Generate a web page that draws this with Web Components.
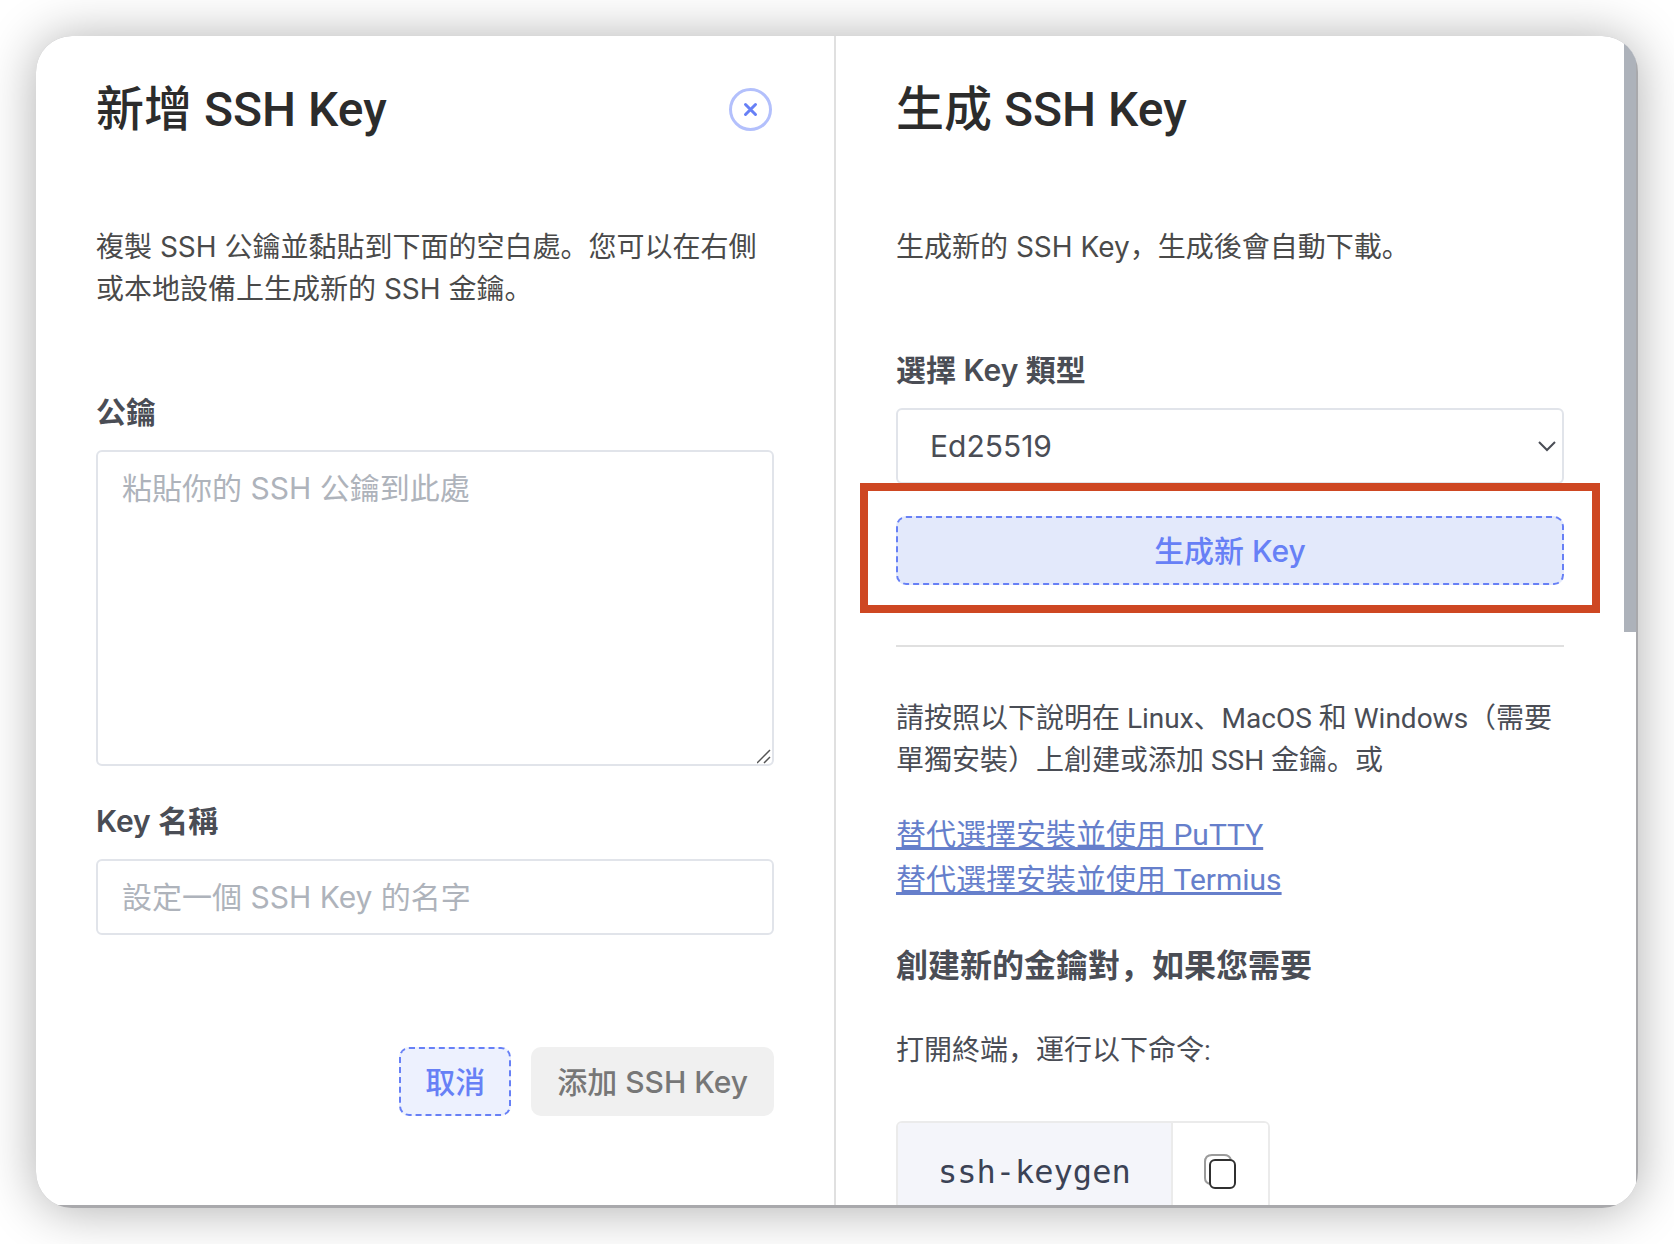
<!DOCTYPE html>
<html lang="zh-Hans">
<head>
<meta charset="utf-8">
<title>SSH Key</title>
<style>
  body {
    margin: 0;
    height: 100vh;
    box-sizing: border-box;
    padding: 36px;
    background: #fff;
    color: #4a4d55;
    font-family: Inter, "Noto Sans CJK SC", sans-serif;
    font-size: 28px;
    line-height: 42px;
  }
</style>
</head>
<body>
<key-dialog>
  <dialog-pane heading="新增 SSH Key">
    <close-button slot="action"></close-button>
    <p>複製 SSH 公鑰並黏貼到下面的空白處。您可以在右側或本地設備上生成新的 SSH 金鑰。</p>
    <text-field label="公鑰" placeholder="粘貼你的 SSH 公鑰到此處" multiline></text-field>
    <text-field label="Key 名稱" placeholder="設定一個 SSH Key 的名字"></text-field>
    <button-row>
      <dialog-button>取消</dialog-button>
      <dialog-button disabled>添加 SSH Key</dialog-button>
    </button-row>
  </dialog-pane>
  <dialog-pane heading="生成 SSH Key" scrollable>
    <p>生成新的 SSH Key，生成後會自動下載。</p>
    <select-field label="選擇 Key 類型" options="Ed25519,RSA,ECDSA"></select-field>
    <highlight-frame>
      <dialog-button active>生成新 Key</dialog-button>
    </highlight-frame>
    <key-guide></key-guide>
  </dialog-pane>
</key-dialog>

<script>
// Two panes side by side in a rounded card
class KeyDialog extends HTMLElement {
  constructor() {
    super();
    this.attachShadow({ mode: 'open' }).innerHTML = `
      <style>
        :host {
          display: block;
          box-sizing: border-box;
          height: 100%;
          padding: 0 2px 3px 0;
          border-radius: 36px;
          overflow: hidden;
          background: #a9a9ac;
          box-shadow: 0 2px 52px rgba(0, 0, 0, 0.32);
        }
        .panes {
          display: grid;
          grid-template-columns: 1fr 1fr;
          height: 100%;
          background: #fff;
        }
        ::slotted(:first-child) {
          border-right: 2px solid #e0e0e0;
        }
      </style>
      <div class="panes"><slot></slot></div>
    `;
  }
}

class DialogPane extends HTMLElement {
  connectedCallback() {
    this.attachShadow({ mode: 'open' }).innerHTML = `
      <style>
        :host {
          display: block;
          position: relative;
          min-width: 0;
          min-height: 0;
          overflow: hidden;
        }
        .content {
          padding: 44px 60px 0;
        }
        :host([scrollable]) .content {
          padding-right: 72px;
        }
        header {
          display: flex;
          align-items: center;
          justify-content: space-between;
          margin-bottom: 86px;
        }
        h2 {
          margin: 0;
          color: #2c2c2c;
          font-family: Roboto, "Noto Sans CJK SC", sans-serif;
          font-size: 48px;
          font-weight: 500;
          line-height: 60px;
        }
        ::slotted(p) {
          margin: 0 0 80px;
          color: #4a4a4a;
        }
        .thumb {
          position: absolute;
          top: 0;
          right: 0;
          width: 12px;
          height: 51%;
          background: #adb2ba;
        }
        :host(:not([scrollable])) .thumb {
          display: none;
        }
      </style>
      <div class="content">
        <header>
          <h2>${this.getAttribute('heading')}</h2>
          <slot name="action"></slot>
        </header>
        <slot></slot>
      </div>
      <div class="thumb"></div>
    `;
  }
}

class CloseButton extends HTMLElement {
  constructor() {
    super();
    this.attachShadow({ mode: 'open' }).innerHTML = `
      <style>
        :host {
          display: block;
        }
        button {
          display: grid;
          place-items: center;
          width: 43px;
          height: 43px;
          margin: 0 2px 2px 0;
          padding: 0;
          border: 3px solid #b3c0fc;
          border-radius: 50%;
          background: none;
        }
      </style>
      <button type="button" aria-label="Close">
        <svg width="15" height="15" viewBox="0 0 15 15" fill="none" stroke="#6780f6" stroke-width="3" stroke-linecap="round">
          <path d="M2.5 2.5l10 10M12.500 2.5l-10 10"/>
        </svg>
      </button>
    `;
  }
}

const fieldStyles = `
  :host {
    display: block;
    margin-bottom: 32px;
    font-size: 30px;
    line-height: 45px;
  }
  label {
    display: block;
    margin-bottom: 15px;
    font-weight: 600;
  }
  input, textarea, select {
    display: block;
    box-sizing: border-box;
    width: 100%;
    height: 76px;
    border: 2px solid #e1e4ea;
    border-radius: 6px;
    background: #fff;
    color: inherit;
    font: inherit;
    outline: none;
  }
`;

class TextField extends HTMLElement {
  connectedCallback() {
    const placeholder = this.getAttribute('placeholder');
    const control = this.hasAttribute('multiline')
      ? `<textarea id="field" placeholder="${placeholder}"></textarea>`
      : `<input id="field" type="text" placeholder="${placeholder}">`;
    this.attachShadow({ mode: 'open' }).innerHTML = `
      <style>
        ${fieldStyles}
        :host {
          margin-bottom: 33px;
        }
        input, textarea {
          padding: 14px 24px;
        }
        textarea {
          height: 316px;
          resize: both;
        }
        textarea::-webkit-resizer {
          background: url('data:image/svg+xml,<svg xmlns="http://www.w3.org/2000/svg" viewBox="0 0 15 15" stroke="%23555" stroke-width="1.5"><path d="M0 14L13 1M7 14l6-6"/></svg>') no-repeat;
        }
        ::placeholder {
          color: #aeb3bb;
          opacity: 1;
        }
      </style>
      <label for="field">${this.getAttribute('label')}</label>
      ${control}
    `;
  }
}

class SelectField extends HTMLElement {
  connectedCallback() {
    const options = this.getAttribute('options').split(',');
    this.attachShadow({ mode: 'open' }).innerHTML = `
      <style>
        ${fieldStyles}
        .control {
          display: grid;
          align-items: center;
        }
        .control > * {
          grid-area: 1 / 1;
        }
        select {
          appearance: none;
          padding: 0 32px;
        }
        svg {
          justify-self: end;
          margin-right: 7px;
          pointer-events: none;
        }
      </style>
      <label for="field">${this.getAttribute('label')}</label>
      <div class="control">
        <select id="field">${options.map(o => `<option>${o}</option>`).join('')}</select>
        <svg width="20" height="12" viewBox="0 0 20 12" fill="none" stroke="#4a4d55" stroke-width="2">
          <path d="M2 2l8 8 8-8"/>
        </svg>
      </div>
    `;
  }
}

class DialogButton extends HTMLElement {
  connectedCallback() {
    this.attachShadow({ mode: 'open' }).innerHTML = `
      <style>
        :host {
          display: block;
        }
        button {
          display: block;
          width: 100%;
          padding: 11px 24px 9px;
          border: 2px dashed #6780f6;
          border-radius: 10px;
          background: #edf1fe;
          color: #6780f6;
          font: inherit;
          font-size: 30px;
          font-weight: 500;
          line-height: 45px;
          white-space: nowrap;
        }
        :host([active]) button {
          background: #e3e9fb;
        }
        button:disabled {
          border-color: transparent;
          background: #f0f0f0;
          color: #777;
        }
      </style>
      <button type="button" ${this.hasAttribute('disabled') ? 'disabled' : ''}><slot></slot></button>
    `;
  }
}

class ButtonRow extends HTMLElement {
  constructor() {
    super();
    this.attachShadow({ mode: 'open' }).innerHTML = `
      <style>
        :host {
          display: flex;
          justify-content: flex-end;
          gap: 20px;
          padding-top: 79px;
        }
      </style>
      <slot></slot>
    `;
  }
}

// Red frame drawn around whatever is slotted in
class HighlightFrame extends HTMLElement {
  constructor() {
    super();
    this.attachShadow({ mode: 'open' }).innerHTML = `
      <style>
        :host {
          display: block;
          position: relative;
        }
        .frame {
          position: absolute;
          inset: -33px -36px -28px;
          border: 8px solid #ce4722;
          pointer-events: none;
        }
      </style>
      <slot></slot>
      <div class="frame"></div>
    `;
  }
}

class CommandBox extends HTMLElement {
  constructor() {
    super();
    this.attachShadow({ mode: 'open' }).innerHTML = `
      <style>
        :host {
          display: inline-flex;
          border: 2px solid #ebebeb;
          border-radius: 6px;
          overflow: hidden;
        }
        code {
          padding: 28px 40px;
          border-right: 2px solid #ebebeb;
          background: #f4f5fa;
          color: #3b4255;
          font-family: "DejaVu Sans Mono", monospace;
          font-size: 32px;
          line-height: 42px;
        }
        button {
          display: grid;
          place-items: center;
          width: 95px;
          padding: 0;
          border: none;
          background: #fff;
        }
      </style>
      <code><slot></slot></code>
      <button type="button" aria-label="Copy">
        <svg width="34" height="38" viewBox="0 0 34 38" fill="none" stroke-width="2">
          <path d="M7 31C3 30 2 28 2 25V9C2 4 4 2 9 2h12c4 0 6 1 7 5" stroke="#9b9b9b"/>
          <rect x="7" y="7" width="25" height="28" rx="5" stroke="#303030"/>
        </svg>
      </button>
    `;
  }
}

class KeyGuide extends HTMLElement {
  constructor() {
    super();
    this.attachShadow({ mode: 'open' }).innerHTML = `
      <style>
        :host {
          display: block;
          margin-top: 60px;
          font-family: Roboto, "Noto Sans CJK SC", sans-serif;
        }
        hr {
          margin: 0 0 51px;
          border: none;
          border-top: 2px solid #e0e0e0;
        }
        p {
          margin: 0;
        }
        nav {
          display: flex;
          flex-direction: column;
          align-items: flex-start;
          margin: 30px 0 40px;
          font-size: 30px;
          line-height: 45px;
        }
        a {
          color: #667fcb;
          text-decoration-thickness: 3px;
        }
        h3 {
          margin: 0 0 40px;
          font-size: 32px;
          font-weight: 600;
          line-height: 48px;
        }
        command-box {
          margin-top: 49px;
        }
      </style>
      <hr>
      <p>請按照以下說明在 Linux、MacOS 和 Windows（需要單獨安裝）上創建或添加 SSH 金鑰。或</p>
      <nav>
        <a href="#putty">替代選擇安裝並使用 PuTTY</a>
        <a href="#termius">替代選擇安裝並使用 Termius</a>
      </nav>
      <h3>創建新的金鑰對，如果您需要</h3>
      <p>打開終端，運行以下命令:</p>
      <command-box>ssh-keygen</command-box>
    `;
  }
}

customElements.define('key-dialog', KeyDialog);
customElements.define('dialog-pane', DialogPane);
customElements.define('close-button', CloseButton);
customElements.define('text-field', TextField);
customElements.define('select-field', SelectField);
customElements.define('dialog-button', DialogButton);
customElements.define('button-row', ButtonRow);
customElements.define('highlight-frame', HighlightFrame);
customElements.define('command-box', CommandBox);
customElements.define('key-guide', KeyGuide);
</script>
</body>
</html>
